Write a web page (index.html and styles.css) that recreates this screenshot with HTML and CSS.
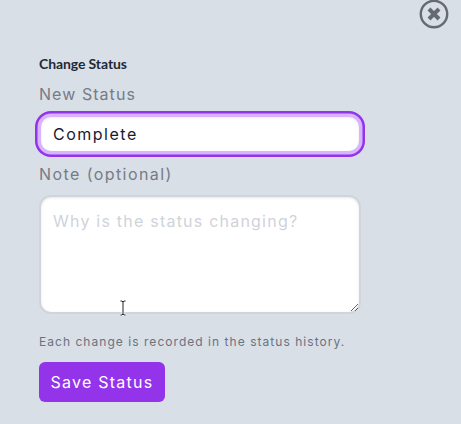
FILE: index.html
```
<!DOCTYPE html>
<html lang="en">
<head>
<meta charset="utf-8">
<title>Change Status</title>
<link rel="stylesheet" href="styles.css">
</head>
<body>
<main class="panel">
  <button class="close" type="button" aria-label="Close">
    <svg viewBox="0 0 30 30" width="30" height="30" aria-hidden="true">
      <circle cx="15" cy="15" r="13.2" fill="none" stroke="#666a70" stroke-width="2.4"/>
      <path d="M10 10 20 20M20 10 10 20" fill="none" stroke="#666a70" stroke-width="4"/>
    </svg>
  </button>
  <form class="form">
    <h2 class="title">Change Status</h2>
    <label class="label" for="status">New Status</label>
    <input class="field field-focus" id="status" type="text" value="Complete">
    <label class="label label-note" for="note">Note (optional)</label>
    <div class="note-wrap">
      <textarea class="field area" id="note" placeholder="Why is the status changing?"></textarea>
      <svg class="cursor" viewBox="0 0 8 16" width="8" height="16" aria-hidden="true">
        <path d="M1.500 1H3l1 1 1-1h1.500M4 2v12M1.500 15H3l1-1 1 1h1.500" fill="none" stroke="#fff" stroke-width="2.600"/>
        <path d="M1.500 1H3l1 1 1-1h1.500M4 2v12M1.500 15H3l1-1 1 1h1.500" fill="none" stroke="#222" stroke-width="1"/>
      </svg>
    </div>
    <p class="hint">Each change is recorded in the status history.</p>
    <button class="save" type="button">Save Status</button>
  </form>
</main>
</body>
</html>
```
FILE: styles.css
```
* { box-sizing: border-box; }
html, body { margin: 0; height: 100%; overflow: hidden; }
body { background: #d9dfe7; font-family: "Inter", "Open Sans", sans-serif; }
.panel { position: relative; height: 424px; padding: 55px 90px 0 39px; }
.close { position: absolute; top: -1px; left: 419px; width: 30px; height: 30px; padding: 0; border: 0; background: none; display: block; }
.close svg { display: block; }
.form { display: flex; flex-direction: column; align-items: flex-start; }
.title { margin: 0; font: 700 14px/17px "Lato", sans-serif; color: #1f2937; letter-spacing: -0.1px; }
.label { display: block; margin-top: 10px; font-size: 16px; line-height: 24px; letter-spacing: 1.05px; color: #767b86; }
.label-note { margin-top: 9px; letter-spacing: 1.42px; }
.field { display: block; width: 322px; border-radius: 12px; background: #fff; color: #1a1a2e; font-family: "Inter", sans-serif; font-size: 16px; outline: none; }
.field-focus { height: 38px; margin-top: 9px; padding: 0 12px; border: 2px solid #d8b4fe; letter-spacing: 1.5px; box-shadow: 0 0 0 1.5px #d8b4fe, 0 0 0 4px #9333ea, inset 0 1px 3px rgba(0,0,0,.08); }
.note-wrap { position: relative; margin-top: 9px; }
.area { height: 119px; padding: 14px 12px; resize: vertical; border: 2px solid #d1d5db; letter-spacing: 1.22px; box-shadow: inset 0 1px 3px rgba(0,0,0,.1); }
.area::placeholder { color: #d0d3da; opacity: 1; }
.cursor { position: absolute; left: 80px; top: 105px; }
.hint { margin: 19px 0 0; font-size: 12px; line-height: 18px; letter-spacing: 1.04px; color: #6b7280; }
.save { margin-top: 11px; width: 126px; height: 40px; padding: 0; border: 0; border-radius: 6px; background: #9333ea; color: #fff; font-family: "Inter", sans-serif; font-size: 16px; letter-spacing: 1.25px; }
```
